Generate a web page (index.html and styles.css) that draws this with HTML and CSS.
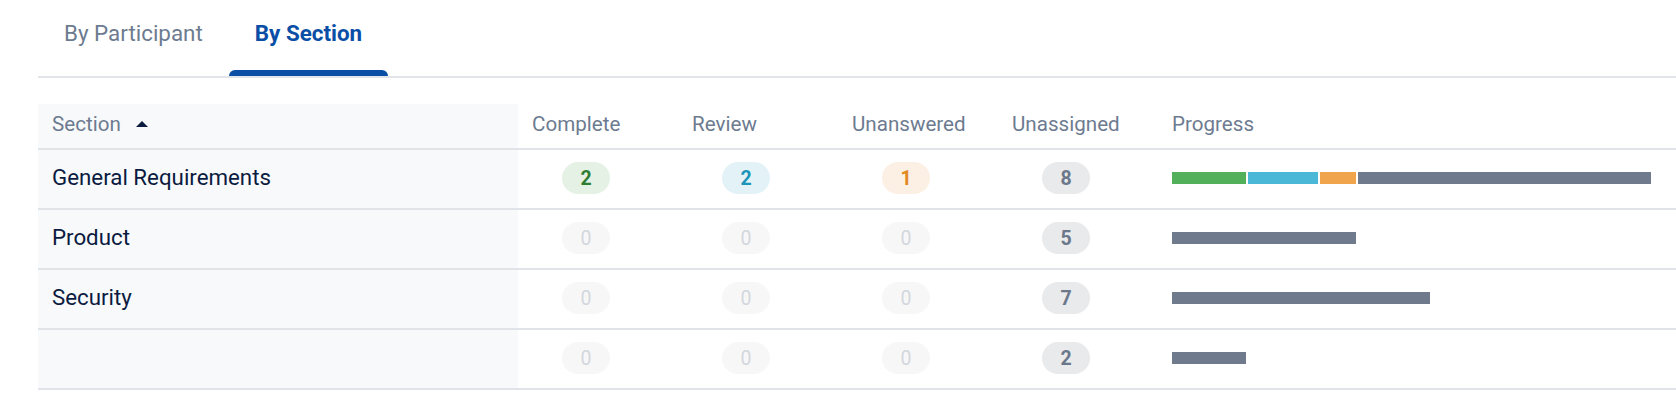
FILE: index.html
```html
<!DOCTYPE html>
<html lang="en">
<head>
    <meta charset="UTF-8">
    <meta name="viewport" content="width=device-width, initial-scale=1.0">
    <title>Progress by Section</title>
    <link rel="stylesheet" href="styles.css">
</head>
<body>
    <div class="panel">
        <div class="tabs">
            <a class="tab">By Participant</a>
            <a class="tab tab-active">By Section</a>
        </div>

        <div class="grid">
            <div class="row row-head">
                <div class="cell cell-name">Section <span class="sort-up"></span></div>
                <div class="cell">Complete</div>
                <div class="cell">Review</div>
                <div class="cell">Unanswered</div>
                <div class="cell">Unassigned</div>
                <div class="cell">Progress</div>
            </div>

            <div class="row">
                <div class="cell cell-name">General Requirements</div>
                <div class="cell"><span class="badge badge-complete">2</span></div>
                <div class="cell"><span class="badge badge-review">2</span></div>
                <div class="cell"><span class="badge badge-unanswered">1</span></div>
                <div class="cell"><span class="badge badge-unassigned">8</span></div>
                <div class="cell">
                    <div class="bar">
                        <span class="seg seg-complete" style="width: 74px"></span>
                        <span class="seg seg-review" style="width: 70px"></span>
                        <span class="seg seg-unanswered" style="width: 36px"></span>
                        <span class="seg seg-unassigned" style="width: 293px"></span>
                    </div>
                </div>
            </div>

            <div class="row">
                <div class="cell cell-name">Product</div>
                <div class="cell"><span class="badge badge-zero">0</span></div>
                <div class="cell"><span class="badge badge-zero">0</span></div>
                <div class="cell"><span class="badge badge-zero">0</span></div>
                <div class="cell"><span class="badge badge-unassigned">5</span></div>
                <div class="cell">
                    <div class="bar">
                        <span class="seg seg-unassigned" style="width: 184px"></span>
                    </div>
                </div>
            </div>

            <div class="row">
                <div class="cell cell-name">Security</div>
                <div class="cell"><span class="badge badge-zero">0</span></div>
                <div class="cell"><span class="badge badge-zero">0</span></div>
                <div class="cell"><span class="badge badge-zero">0</span></div>
                <div class="cell"><span class="badge badge-unassigned">7</span></div>
                <div class="cell">
                    <div class="bar">
                        <span class="seg seg-unassigned" style="width: 258px"></span>
                    </div>
                </div>
            </div>

            <div class="row">
                <div class="cell cell-name"></div>
                <div class="cell"><span class="badge badge-zero">0</span></div>
                <div class="cell"><span class="badge badge-zero">0</span></div>
                <div class="cell"><span class="badge badge-zero">0</span></div>
                <div class="cell"><span class="badge badge-unassigned">2</span></div>
                <div class="cell">
                    <div class="bar">
                        <span class="seg seg-unassigned" style="width: 74px"></span>
                    </div>
                </div>
            </div>
        </div>
    </div>
</body>
</html>
```

FILE: styles.css
```css
body {
    margin: 0;
    font-family: Roboto, "Liberation Sans", sans-serif;
    background-color: #ffffff;
    color: #0b1b3f;
}

.panel {
    padding-left: 38px;
}

/* Tabs */
.tabs {
    display: flex;
    height: 76px;
    border-bottom: 2px solid #e1e5ea;
}

.tab {
    position: relative;
    padding: 20px 26px 0;
    font-size: 22.4px;
    line-height: 26px;
    color: #6d7b90;
    cursor: pointer;
}

.tab-active {
    color: #0b4ea6;
    font-weight: 700;
}

.tab-active::after {
    content: "";
    position: absolute;
    left: 0;
    right: 0;
    bottom: 0;
    height: 6px;
    background-color: #0b4ea6;
    border-radius: 6px 6px 0 0;
}

/* Section table */
.grid {
    margin-top: 26px;
}

.row {
    display: grid;
    grid-template-columns: 480px repeat(4, 160px) 1fr;
    height: 56px;
    padding-bottom: 2px;
    border-bottom: 2px solid #e0e3e8;
}

.row-head {
    height: 40px;
    padding-bottom: 4px;
    font-size: 20.6px;
    color: #6d7b90;
}

.cell {
    display: flex;
    align-items: center;
    padding-left: 14px;
}

.cell-name {
    background-color: #f8f9fb;
    font-size: 22.3px;
    color: #0b1b3f;
    margin-bottom: -2px;
    padding-bottom: 4px;
}

.row-head .cell-name {
    font-size: 20.6px;
    color: #6d7b90;
    margin-bottom: -4px;
    padding-bottom: 4px;
}

.sort-up {
    width: 0;
    height: 0;
    margin-left: 15px;
    border-left: 6.5px solid transparent;
    border-right: 6.5px solid transparent;
    border-bottom: 6px solid #0b1b3f;
}

/* Count badges */
.badge {
    display: flex;
    align-items: center;
    justify-content: center;
    width: 48px;
    height: 32px;
    margin-left: 30px;
    border-radius: 16px;
    font-size: 19.5px;
    font-weight: 700;
}

.badge-complete {
    background-color: #e6f1e6;
    color: #2e7d32;
}

.badge-review {
    background-color: #e3f2f7;
    color: #1b94b9;
}

.badge-unanswered {
    background-color: #fbf0e3;
    color: #e2891f;
}

.badge-unassigned {
    background-color: #e9eaeb;
    color: #6b778a;
}

.badge-zero {
    background-color: #f7f7f8;
    color: #d3d7dc;
    font-weight: 400;
}

/* Progress bar */
.bar {
    display: flex;
    gap: 2px;
    height: 12px;
}

.seg {
    display: block;
    height: 12px;
}

.seg-complete {
    background-color: #52b05a;
}

.seg-review {
    background-color: #4bb8d8;
}

.seg-unanswered {
    background-color: #f0a44c;
}

.seg-unassigned {
    background-color: #6f7b8d;
}
```
